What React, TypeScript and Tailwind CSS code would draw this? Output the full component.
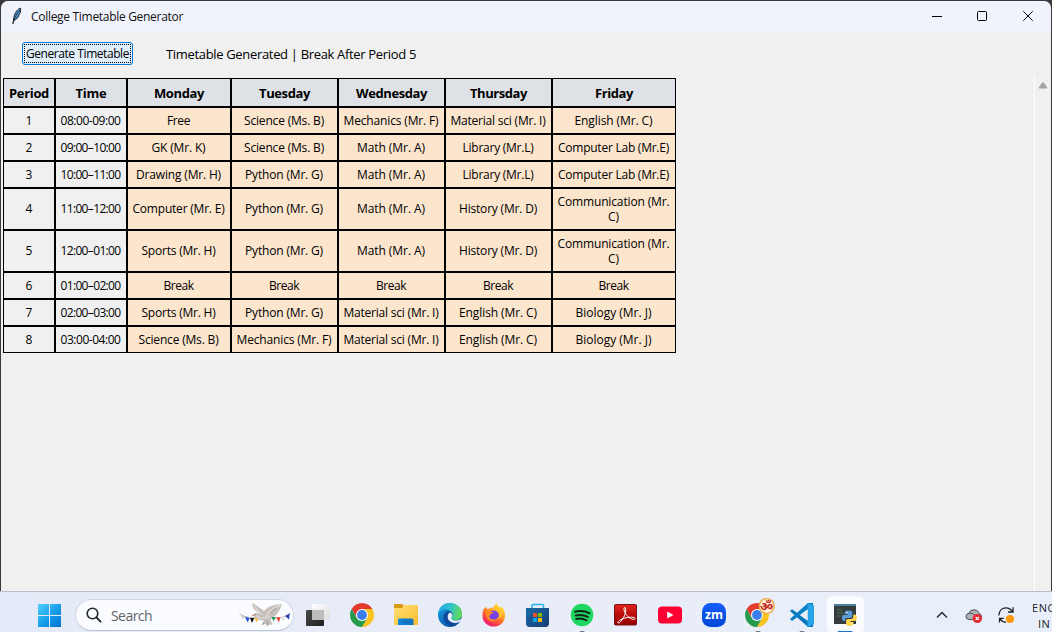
import { useLayoutEffect, useRef, type ReactNode } from "react";

/* Spreads a line of text over a given width by adjusting its tracking. */
function Fit({ text, width, className = "" }: { text: string; width: number; className?: string }) {
  const ref = useRef<HTMLSpanElement>(null);
  useLayoutEffect(() => {
    const el = ref.current;
    if (!el) return;
    el.style.letterSpacing = "0px";
    const natural = el.getBoundingClientRect().width;
    el.style.letterSpacing = `${(width - natural) / text.length}px`;
  }, [text, width]);
  return (
    <span ref={ref} className={`inline-block whitespace-pre ${className}`}>
      {text}
    </span>
  );
}

const textWidths: Record<string, number> = {
  Period: 40, Time: 31, Monday: 50, Tuesday: 51, Wednesday: 71, Thursday: 57, Friday: 38,
  Free: 23, Break: 30, "Science (Ms. B)": 80, "Mechanics (Mr. F)": 95, "Material sci (Mr. I)": 95,
  "English (Mr. C)": 78, "GK (Mr. K)": 54, "Math (Mr. A)": 68, "Library (Mr.L)": 71,
  "Computer Lab (Mr.E)": 111, "Drawing (Mr. H)": 85, "Python (Mr. G)": 78,
  "Communication (Mr.": 112, "C)": 11, "Computer (Mr. E)": 92, "History (Mr. D)": 78,
  "Sports (Mr. H)": 74, "Biology (Mr. J)": 76,
};

const days = ["Period", "Time", "Monday", "Tuesday", "Wednesday", "Thursday", "Friday"];

const rows: string[][] = [
  ["1", "08:00-09:00", "Free", "Science (Ms. B)", "Mechanics (Mr. F)", "Material sci (Mr. I)", "English (Mr. C)"],
  ["2", "09:00–10:00", "GK (Mr. K)", "Science (Ms. B)", "Math (Mr. A)", "Library (Mr.L)", "Computer Lab (Mr.E)"],
  ["3", "10:00–11:00", "Drawing (Mr. H)", "Python (Mr. G)", "Math (Mr. A)", "Library (Mr.L)", "Computer Lab (Mr.E)"],
  ["4", "11:00–12:00", "Computer (Mr. E)", "Python (Mr. G)", "Math (Mr. A)", "History (Mr. D)", "Communication (Mr.\nC)"],
  ["5", "12:00–01:00", "Sports (Mr. H)", "Python (Mr. G)", "Math (Mr. A)", "History (Mr. D)", "Communication (Mr.\nC)"],
  ["6", "01:00–02:00", "Break", "Break", "Break", "Break", "Break"],
  ["7", "02:00–03:00", "Sports (Mr. H)", "Python (Mr. G)", "Material sci (Mr. I)", "English (Mr. C)", "Biology (Mr. J)"],
  ["8", "03:00-04:00", "Science (Ms. B)", "Mechanics (Mr. F)", "Material sci (Mr. I)", "English (Mr. C)", "Biology (Mr. J)"],
];

function Timetable() {
  return (
    <div className="ml-[2px] grid w-[673px] grid-cols-[52px_72px_104px_107px_107px_107px_124px] grid-rows-[29px_27px_27px_27px_42px_42px_27px_27px_27px] text-[12px] leading-[15px] text-black">
      {days.map((d) => (
        <div key={d} className="flex items-center justify-center border border-black bg-[#dee2e6] pt-px text-[13px] font-bold">
          <Fit text={d} width={textWidths[d]} />
        </div>
      ))}
      {rows.map((r) =>
        r.map((c, i) => (
          <div
            key={`${r[0]}-${i}`}
            className={`flex flex-col items-center justify-center border border-black pr-px ${i < 2 ? "bg-[#f0f0f0]" : "bg-[#fce5cd]"} ${(r[0] === "4" || r[0] === "5") && !c.includes("\n") ? "pb-px" : ""}`}
          >
            {c.split("\n").map((line) => (
              <Fit key={line} text={line} width={i === 0 ? 6 : i === 1 ? 60 : textWidths[line]} />
            ))}
          </div>
        )),
      )}
    </div>
  );
}

function TitleBar() {
  return (
    <header className="flex h-[30px] items-center rounded-t-[7px] bg-[#f0f3fb] pl-[10px]">
      <svg width="13" height="18" viewBox="0 0 13 18">
        <path d="M1.8 17 C2.6 12 4.5 8 8.6 4" stroke="#111" strokeWidth="1.2" fill="none" />
        <path d="M9.6 1.2 C7 1.6 4 5.4 3 9.5 L2.6 13 L4.6 12.6 L7 10.4 L8.2 7.6 L9.4 5.2 Z" fill="#4f8dcb" stroke="#111" strokeWidth=".9" />
        <path d="M2.6 14.5 C4 10 6 6.5 8.6 3.4" stroke="#17242f" strokeWidth=".8" fill="none" />
      </svg>
      <span className="ml-[7px] pt-px text-[12px] leading-[16px] text-[#111]">
        <Fit text="College Timetable Generator" width={152} />
      </span>
      <div className="ml-auto flex pr-[17px] text-black">
        <svg width="112" height="18" viewBox="922 6 112 18" fill="none" stroke="currentColor">
          <path d="M932 15.5H942" />
          <rect x="977.5" y="10.5" width="9" height="9" rx="1" />
          <path d="M1023.3 10.3L1032.7 19.7M1032.7 10.3L1023.3 19.7" />
        </svg>
      </div>
    </header>
  );
}

function Slot({ children, className = "" }: { children: ReactNode; className?: string }) {
  return (
    <svg className={`shrink-0 ${className}`} width="44" height="40" viewBox="0 0 44 40">
      {children}
    </svg>
  );
}

function Running() {
  return <rect x="20.5" y="39" width="5" height="2" rx="1" fill="#777c84" />;
}

function Chrome() {
  const sector = "M-10.39 -6A12 12 0 0 1 10.39 -6L0 -6L-5.2 3Z";
  return (
    <g transform="translate(22 23)">
      <path d={sector} fill="#e33b2e" />
      <path d={sector} fill="#fcc31e" transform="rotate(120)" />
      <path d={sector} fill="#259a4a" transform="rotate(240)" />
      <circle r="6" fill="#fff" />
      <circle r="4.9" fill="#3b7ded" />
    </g>
  );
}

function SearchBox() {
  return (
    <div className="ml-[13px] mt-[7px] flex h-[32px] w-[219px] shrink-0 items-center rounded-full border border-[#cfd7e5] border-b-[#bdc5d2] bg-[#fafcff]">
      <svg className="ml-[9px]" width="18" height="18" viewBox="0 0 18 18" fill="none" stroke="#24272c">
        <circle cx="7.5" cy="7.5" r="5.3" strokeWidth="1.6" />
        <path d="M11.4 11.4L15.5 15.6" strokeWidth="2" strokeLinecap="round" />
      </svg>
      <span className="ml-[8px] pt-px text-[14px] leading-[20px] text-[#5e6268]">
        <Fit text="Search" width={41} />
      </span>
      <svg className="ml-auto mr-[1px]" width="54" height="28" viewBox="238 601 54 28">
        <path d="M239.5 614Q249 619.5 260 617M272 618Q283 619 290.5 613" stroke="#a7a6a7" fill="none" strokeWidth=".8" />
        <path d="M240.5 614.5L245 617L242.5 619Z" fill="#ccc" />
        <path d="M245 616.7L249.5 618L247.8 622.5Z" fill="#1b49d4" />
        <path d="M250 618L254.3 618L252 623Z" fill="#111" />
        <path d="M254.5 618L258.3 618L257 622.5Z" fill="#ffb41a" />
        <path d="M252.4 615.5Q254 612.8 256.8 613L260 614Q250 607.5 253 603Q259 607 264 611Q269 604.5 281.7 604Q279.5 614 271.5 618.5L270.5 620L272.5 625L269 624.5L267.5 626.5L265.5 624L261.5 625L264 620.5Q256.5 620.5 254 616Z" fill="#c7bfba" />
        <path d="M253.5 604.5Q257.5 611 262.5 615M280 605.5Q270 608 266 617M254.5 614.8Q260 620 270 617" stroke="#e0dad4" strokeWidth="1.4" fill="none" />
        <path d="M276 608L270 613M264 622L262.8 625M267.5 621L267.5 625.5" stroke="#8e8993" strokeWidth=".7" fill="none" />
        <path d="M271.5 617L275.5 617L273.8 621.5Z" fill="#1a9b5b" />
        <path d="M276 617.5L280.5 617L279 622.2Z" fill="#ed4537" />
        <path d="M281 617L284.5 616L284 621Z" fill="#ddd" />
        <path d="M285 616L289.7 613.5L289 619.5Z" fill="#253fb7" />
        <path d="M251.2 615.8L254 614.4L253.7 616Z" fill="#ea695b" />
        <circle cx="255.2" cy="614.7" r=".5" fill="#222" />
      </svg>
    </div>
  );
}

function Taskbar() {
  return (
    <footer className="flex h-[41px] w-full overflow-hidden border-t border-[#b9bdc9] bg-linear-to-r from-[#e5eaf8] via-[#e8edf8] to-[#e9effa]">
      <svg className="ml-[38px] shrink-0" width="24" height="40" viewBox="38 0 24 40">
        <defs>
          <linearGradient id="win" x1="38" y1="12" x2="61" y2="35" gradientUnits="userSpaceOnUse">
            <stop stopColor="#51d1fb" />
            <stop offset=".5" stopColor="#18a0ea" />
            <stop offset="1" stopColor="#0072d0" />
          </linearGradient>
        </defs>
        <path d="M38 12H49V23H38ZM50 12H61V23H50ZM38 24H49V35H38ZM50 24H61V35H50Z" fill="url(#win)" />
      </svg>
      <SearchBox />
      <div className="ml-px flex">
        <Slot>
          <defs>
            <linearGradient id="tvd" x1="0" y1="0" x2="1" y2="1"><stop stopColor="#4a4a4a" /><stop offset="1" stopColor="#1f1f1f" /></linearGradient>
            <linearGradient id="tvl" x1="0" y1="0" x2="1" y2="1"><stop stopColor="#fff" /><stop offset="1" stopColor="#dedede" /></linearGradient>
          </defs>
          <rect x="17" y="12" width="18" height="16" rx="1" fill="url(#tvl)" />
          <rect x="11" y="18" width="18" height="16" rx="1" fill="url(#tvd)" />
          <rect x="17" y="18" width="12" height="10" fill="#bdbdbd" />
        </Slot>
        <Slot><g transform="translate(1 0)"><Chrome /></g></Slot>
        <Slot>
          <defs>
            <linearGradient id="fold" x1="0" y1="0" x2="1" y2="1"><stop stopColor="#ffdf76" /><stop offset="1" stopColor="#f9bd2e" /></linearGradient>
            <linearGradient id="fblue" x1="0" y1="0" x2="1" y2="0"><stop stopColor="#0b8ad9" /><stop offset="1" stopColor="#1572bd" /></linearGradient>
          </defs>
          <path d="M11 13Q11 12 12 12H19L21 14V17H11Z" fill="#d89a11" />
          <path d="M11 16H19L21 13H34Q35 13 35 14V32Q35 33 34 33H12Q11 33 11 32Z" fill="url(#fold)" />
          <path d="M15 33V28Q15 26.5 16.5 26.5H29Q30.5 26.5 30.5 28V33Z" fill="url(#fblue)" />
          <path d="M19 30H27" stroke="#1262a6" strokeWidth="1" />
        </Slot>
        <Slot>
          <defs>
            <linearGradient id="edgeTop" x1="10" y1="16" x2="34" y2="22" gradientUnits="userSpaceOnUse"><stop stopColor="#20a5e3" /><stop offset=".5" stopColor="#2cc3d0" /><stop offset="1" stopColor="#65dc55" /></linearGradient>
            <linearGradient id="edgeLow" x1="11" y1="18" x2="22" y2="35" gradientUnits="userSpaceOnUse"><stop stopColor="#1697dc" /><stop offset="1" stopColor="#0756a7" /></linearGradient>
          </defs>
          <circle cx="23" cy="23" r="12" fill="url(#edgeLow)" />
          <path d="M11 22.5C12 15 16.5 11 23 11C30 11 35 16 35 22C35 26 32 28.3 28 28.3C25.5 28.3 24 27.5 24 26.5C24.5 25.5 25.5 25 25.5 23C25.5 19 21 17 17 17.6C14 18 12 20 11 22.5Z" fill="url(#edgeTop)" />
          <path d="M16.5 25C16.5 21.5 19 18.8 22.3 19.2C24.5 19.6 25.6 21.3 25.5 23C24.8 25.2 23.5 25.5 24 26.7C25.5 29.6 31 29 34.2 26.7C31 33 26 35.5 21.5 33.3C18.5 31.8 16.5 28.5 16.5 25Z" fill="#11489a" />
          <path d="M20.7 24.5C20.8 22.5 21.6 21 23.2 20.5C25 21.5 25.8 23 25.2 24.5C23.5 26 24 28.3 28.3 28.6C31 28.7 33 27.6 35 26.2L34.2 29C30 31.6 26 31.4 23 29.3C21.3 28.2 20.6 26.5 20.7 24.5Z" fill="#e8f0fa" />
        </Slot>
        <Slot>
          <defs>
            <linearGradient id="fox" x1="30" y1="12" x2="16" y2="34" gradientUnits="userSpaceOnUse"><stop stopColor="#fff04a" /><stop offset=".4" stopColor="#ff9c24" /><stop offset=".7" stopColor="#ff493d" /><stop offset="1" stopColor="#e31587" /></linearGradient>
          </defs>
          <path d="M12.8 16.8L14.8 14.7L16 17L18 16.8Q20 15 22.5 15.8Q22.5 13.5 25.5 11.2Q26.5 14 30 16L31 14.5Q34.5 19 34 24.5C33.5 31 28.5 34.6 22.8 34.6C16.5 34.6 11.5 30 11.5 24Q11.2 19.5 12.8 16.8Z" fill="url(#fox)" />
          <circle cx="22.8" cy="23.5" r="5" fill="#7542e5" />
          <path d="M13.5 19L16.4 18.6L20 19.7L23 20.3L20 22L18 24L19.5 27L24 27.8L28 25Q26 30 21 29.5Q16 28.5 15 23Z" fill="#ff8b20" />
          <path d="M23 18L26 18.3Q29 21 28 25.5L27 27Q31 26 31 20Q29 16 25.5 15Z" fill="#ffc52c" />
        </Slot>
        <Slot>
          <defs><linearGradient id="store" x1="0" y1="0" x2="1" y2="1"><stop stopColor="#176bac" /><stop offset="1" stopColor="#183c70" /></linearGradient></defs>
          <path d="M17 17V13.2Q17 12.5 18 12.5H27.5Q28.5 12.5 28.5 13.2V17" fill="none" stroke="#24b4ee" strokeWidth="1.6" />
          <path d="M11 16H34V31Q34 35 30.5 35H14.5Q11 35 11 31Z" fill="url(#store)" />
          <rect x="18" y="21" width="4" height="4" fill="#f25022" /><rect x="23" y="21" width="4" height="4" fill="#7fba00" />
          <rect x="18" y="26" width="4" height="4" fill="#00a4ef" /><rect x="23" y="26" width="4" height="4" fill="#ffb900" />
        </Slot>
        <Slot>
          <circle cx="23" cy="23" r="11.3" fill="#1ed760" />
          <path d="M16 19.7Q23.5 17.6 30.3 21.2M16.6 23.5Q23 21.8 28.8 24.9M17.2 27Q22.7 25.7 27.5 28.3" fill="none" stroke="#10251a" strokeWidth="2" strokeLinecap="round" />
          <Running />
        </Slot>
        <Slot>
          <defs><linearGradient id="pdf" x1="0" y1="0" x2="0" y2="1"><stop stopColor="#e1271c" /><stop offset=".5" stopColor="#bd0b09" /><stop offset="1" stopColor="#920404" /></linearGradient></defs>
          <rect x="11.5" y="12.5" width="22" height="20.5" rx="1" fill="url(#pdf)" stroke="#791416" />
          <path d="M22 15.5C20 15.5 21 20 24 23.5C27 27.2 32 28.5 32 26.5C32 24.5 23 24.7 18 27.5C14 29.5 14.5 32 16.5 30.7C20 28.5 24.5 19 22 15.5Z" stroke="#fff" strokeWidth="1" fill="none" />
        </Slot>
        <Slot>
          <rect x="11" y="14.5" width="24" height="17" rx="4" fill="#ff0033" />
          <path d="M20.2 19.5V26.5L26.5 23Z" fill="#fff" />
        </Slot>
        <Slot>
          <defs><linearGradient id="zoom" x1="0" y1="0" x2="0" y2="1"><stop stopColor="#155ef8" /><stop offset="1" stopColor="#0046d7" /></linearGradient></defs>
          <rect x="11" y="11" width="24" height="24" rx="8.5" fill="url(#zoom)" />
          <text x="23" y="27" textAnchor="middle" fill="#fff" fontSize="13" fontWeight="700" textLength="18" lengthAdjust="spacingAndGlyphs">zm</text>
        </Slot>
        <Slot>
          <Chrome />
          <circle cx="31.7" cy="14" r="7.4" fill="#fff6db" stroke="#eaa647" strokeWidth="1.4" />
          <text x="31.7" y="18.5" textAnchor="middle" fill="#c62825" fontSize="13" fontWeight="700">ॐ</text>
          <Running />
        </Slot>
        <Slot>
          <path d="M11 19L13 17.3L34 32V35L29 34.9Z" fill="#0876bc" />
          <path d="M11 27L13 29L34 14V11L29 11Z" fill="#087fc7" />
          <path d="M28.5 11L35 13.5V32.5L28.5 35Z" fill="#28a2e6" />
          <path d="M28.5 17.2V28.8L20.8 23Z" fill="#e8edf8" />
          <Running />
        </Slot>
        <Slot>
          <rect x="3.5" y="4" width="38" height="37" rx="5" fill="#f9fbfe" stroke="#eef1f8" />
          <rect x="11" y="12" width="22" height="20" fill="#343a3d" />
          <path d="M11 12H33V14H11Z" fill="#477d9b" />
          <path d="M14 18H19M14 21H22M14 24H18" stroke="#477655" strokeWidth="1" />
          <path d="M22 19.5Q22.5 18.5 25.5 18.5Q29.3 18.5 29.3 20.5V24Q29.3 26 27.3 26H24Q22 26 22 28V29H21Q19 29 19 26Q19 22.8 21 22.8H25V22H22Z" fill="#5a9bd4" />
          <path d="M30.3 22.5H31.5Q33.9 22.5 33.9 26Q33.9 29 31.5 29H27.5V30H30.5V31.5Q30.5 34 26.5 34Q23 34 23 31.5V28.5Q23 26.9 25 26.9H28.3Q30.3 26.9 30.3 24.5Z" fill="#fbd54b" />
          <circle cx="24" cy="20.5" r=".7" fill="#fff" /><circle cx="28.5" cy="31.7" r=".7" fill="#fff" />
          <rect x="14.5" y="39" width="15" height="2" rx="1" fill="#1474c8" />
        </Slot>
      </div>
      <svg className="ml-[63px] shrink-0" width="94" height="40" viewBox="930 592 94 40">
        <path d="M937 617.5L942 612.5L947 617.5" fill="none" stroke="#202328" strokeWidth="1.4" />
        <path d="M969 619.5Q966 619.3 966 616.5Q966 613.7 969 613.2Q970 609.6 974 609.8Q977.4 609.5 979 613Q981.5 614 981.5 617L979 620Z" fill="#b0b3b5" stroke="#4d5154" strokeWidth="1" />
        <path d="M969.2 613.5Q972.5 612.5 974.5 615L979 618" fill="none" stroke="#555" strokeWidth="1" />
        <circle cx="977.3" cy="618.5" r="4.6" fill="#e0242f" />
        <path d="M975.6 616.8L979 620.2M979 616.8L975.6 620.2" stroke="#fff" strokeWidth="1.2" />
        <path d="M998.8 615.5C999 610.8 1002 607.8 1006 607.8Q1010 607.8 1012.5 611.7M1013 607.2V612H1008M1006 622.4Q1001.8 621.8 999.8 618.7M999.5 622.5V618.4H1003.8" fill="none" stroke="#202328" strokeWidth="1.3" />
        <circle cx="1010" cy="619" r="4.1" fill="#ff980b" />
      </svg>
      <div className="ml-[8px] flex shrink-0 flex-col pt-[8px] text-[11px] leading-[16px] text-[#202328]">
        <Fit text="ENG" width={24} />
        <span className="pl-[6px]"><Fit text="IN" width={12} /></span>
      </div>
    </footer>
  );
}

export default function App() {
  return (
    <div className="flex h-[632px] w-[1052px] flex-col overflow-hidden bg-[#3c393d] font-['Open_Sans','Noto_Sans',sans-serif]">
      <main className="mx-px mt-px flex h-[590px] shrink-0 flex-col overflow-hidden rounded-t-[7px] bg-[#f0f0f0]">
        <TitleBar />
        <div className="flex h-[45px] shrink-0 items-center pl-[21px] text-black">
          <button className="flex h-[23px] w-[111px] items-center justify-center rounded-[3px] border border-[#0078d4] bg-[#e0eef9] p-px">
            <span className="flex h-full w-full items-center justify-center border border-dotted border-black text-[12px] leading-[15px]">
              <Fit text="Generate Timetable" width={103} />
            </span>
          </button>
          <span className="ml-[33px] pt-px text-[13px] leading-[18px]">
            <Fit text="Timetable Generated | Break After Period 5" width={250} />
          </span>
        </div>
        <div className="flex grow">
          <div className="grow pt-[2px]">
            <Timetable />
          </div>
          <div className="flex w-[17px] justify-center border-l border-white pt-[6px]">
            <svg width="10" height="7" viewBox="0 0 10 7">
              <path d="M1 6H9L5.8 1.2Q5 .4 4.2 1.2Z" fill="#a3a3a3" stroke="#a3a3a3" strokeLinejoin="round" />
            </svg>
          </div>
        </div>
      </main>
      <Taskbar />
    </div>
  );
}
